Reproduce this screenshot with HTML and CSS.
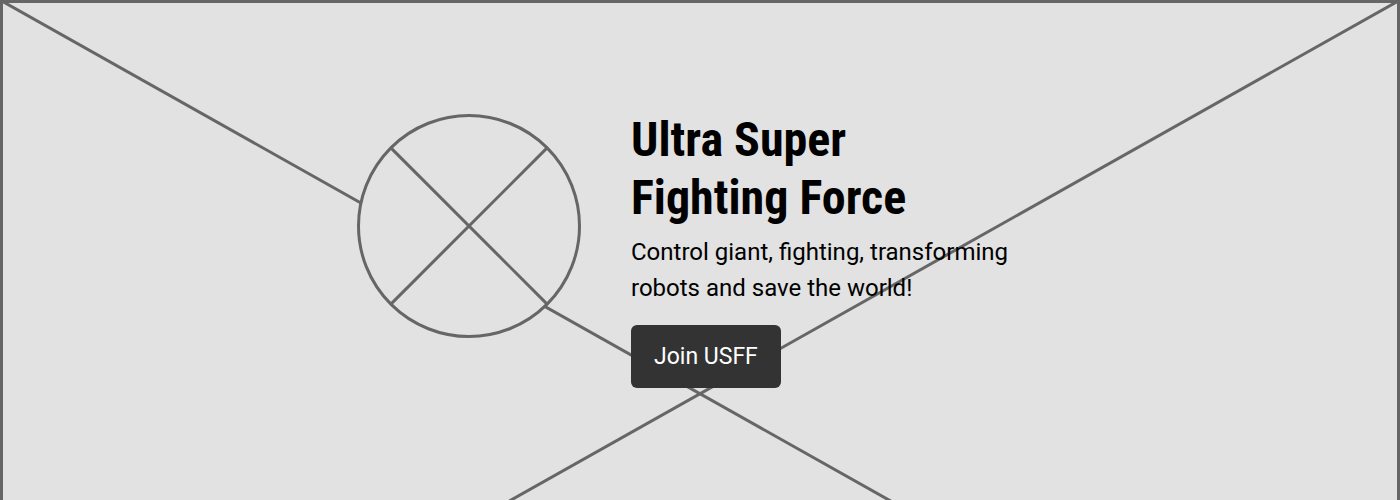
FILE: index.html
```html
<!DOCTYPE html>
<html lang="en">
<head>
<meta charset="utf-8">
<title>Ultra Super Fighting Force</title>
<link rel="stylesheet" href="styles.css">
</head>
<body>
<section class="hero">
  <svg class="hero-bg" viewBox="0 0 1400 787.5" preserveAspectRatio="none" aria-hidden="true">
    <rect x="1.5" y="1.5" width="1397" height="784.5" fill="none" stroke="#666" stroke-width="3"/>
    <line x1="0" y1="0" x2="1400" y2="787.5" stroke="#666" stroke-width="3"/>
    <line x1="1400" y1="0" x2="0" y2="787.5" stroke="#666" stroke-width="3"/>
  </svg>
  <div class="hero-inner">
    <svg class="logo" viewBox="0 0 224 224" aria-hidden="true">
      <circle cx="112" cy="112" r="110.5" fill="#e2e2e2" stroke="#666" stroke-width="3"/>
      <line x1="34.4" y1="34.4" x2="189.6" y2="189.6" stroke="#666" stroke-width="3"/>
      <line x1="189.6" y1="34.4" x2="34.4" y2="189.6" stroke="#666" stroke-width="3"/>
    </svg>
    <div class="copy">
      <h1 class="title">Ultra Super<br>Fighting Force</h1>
      <p class="lead">Control giant, fighting, transforming robots and save the world!</p>
      <a class="btn" href="#">Join USFF</a>
    </div>
  </div>
</section>
</body>
</html>
```
FILE: styles.css
```css
html, body {
  margin: 0;
  padding: 0;
}
body {
  background: #e2e2e2;
  font-family: Roboto, "Liberation Sans", sans-serif;
  color: #000;
}
.hero {
  position: relative;
  width: 1400px;
  height: 500px;
  overflow: hidden;
  background: #e2e2e2;
}
.hero-bg {
  position: absolute;
  left: 0;
  top: 0;
  width: 1400px;
  height: 787.5px;
}
.hero-inner {
  position: relative;
  display: flex;
  justify-content: center;
  align-items: flex-start;
  gap: 50px;
  padding-top: 111px;
}
.logo {
  display: block;
  width: 224px;
  height: 224px;
  margin-top: 3px;
  flex: none;
}
.copy {
  width: 412px;
}
.title {
  margin: 0 0 8px;
  font-family: "Roboto Condensed", Roboto, sans-serif;
  font-stretch: condensed;
  font-weight: 700;
  font-size: 48px;
  line-height: 57.6px;
}
.lead {
  margin: 0 0 19px;
  font-size: 24px;
  line-height: 36px;
}
.btn {
  display: inline-block;
  padding: 16px 23px;
  background: #333;
  color: #fff;
  border-radius: 6px;
  font-size: 23px;
  line-height: 31px;
  text-decoration: none;
}
```
